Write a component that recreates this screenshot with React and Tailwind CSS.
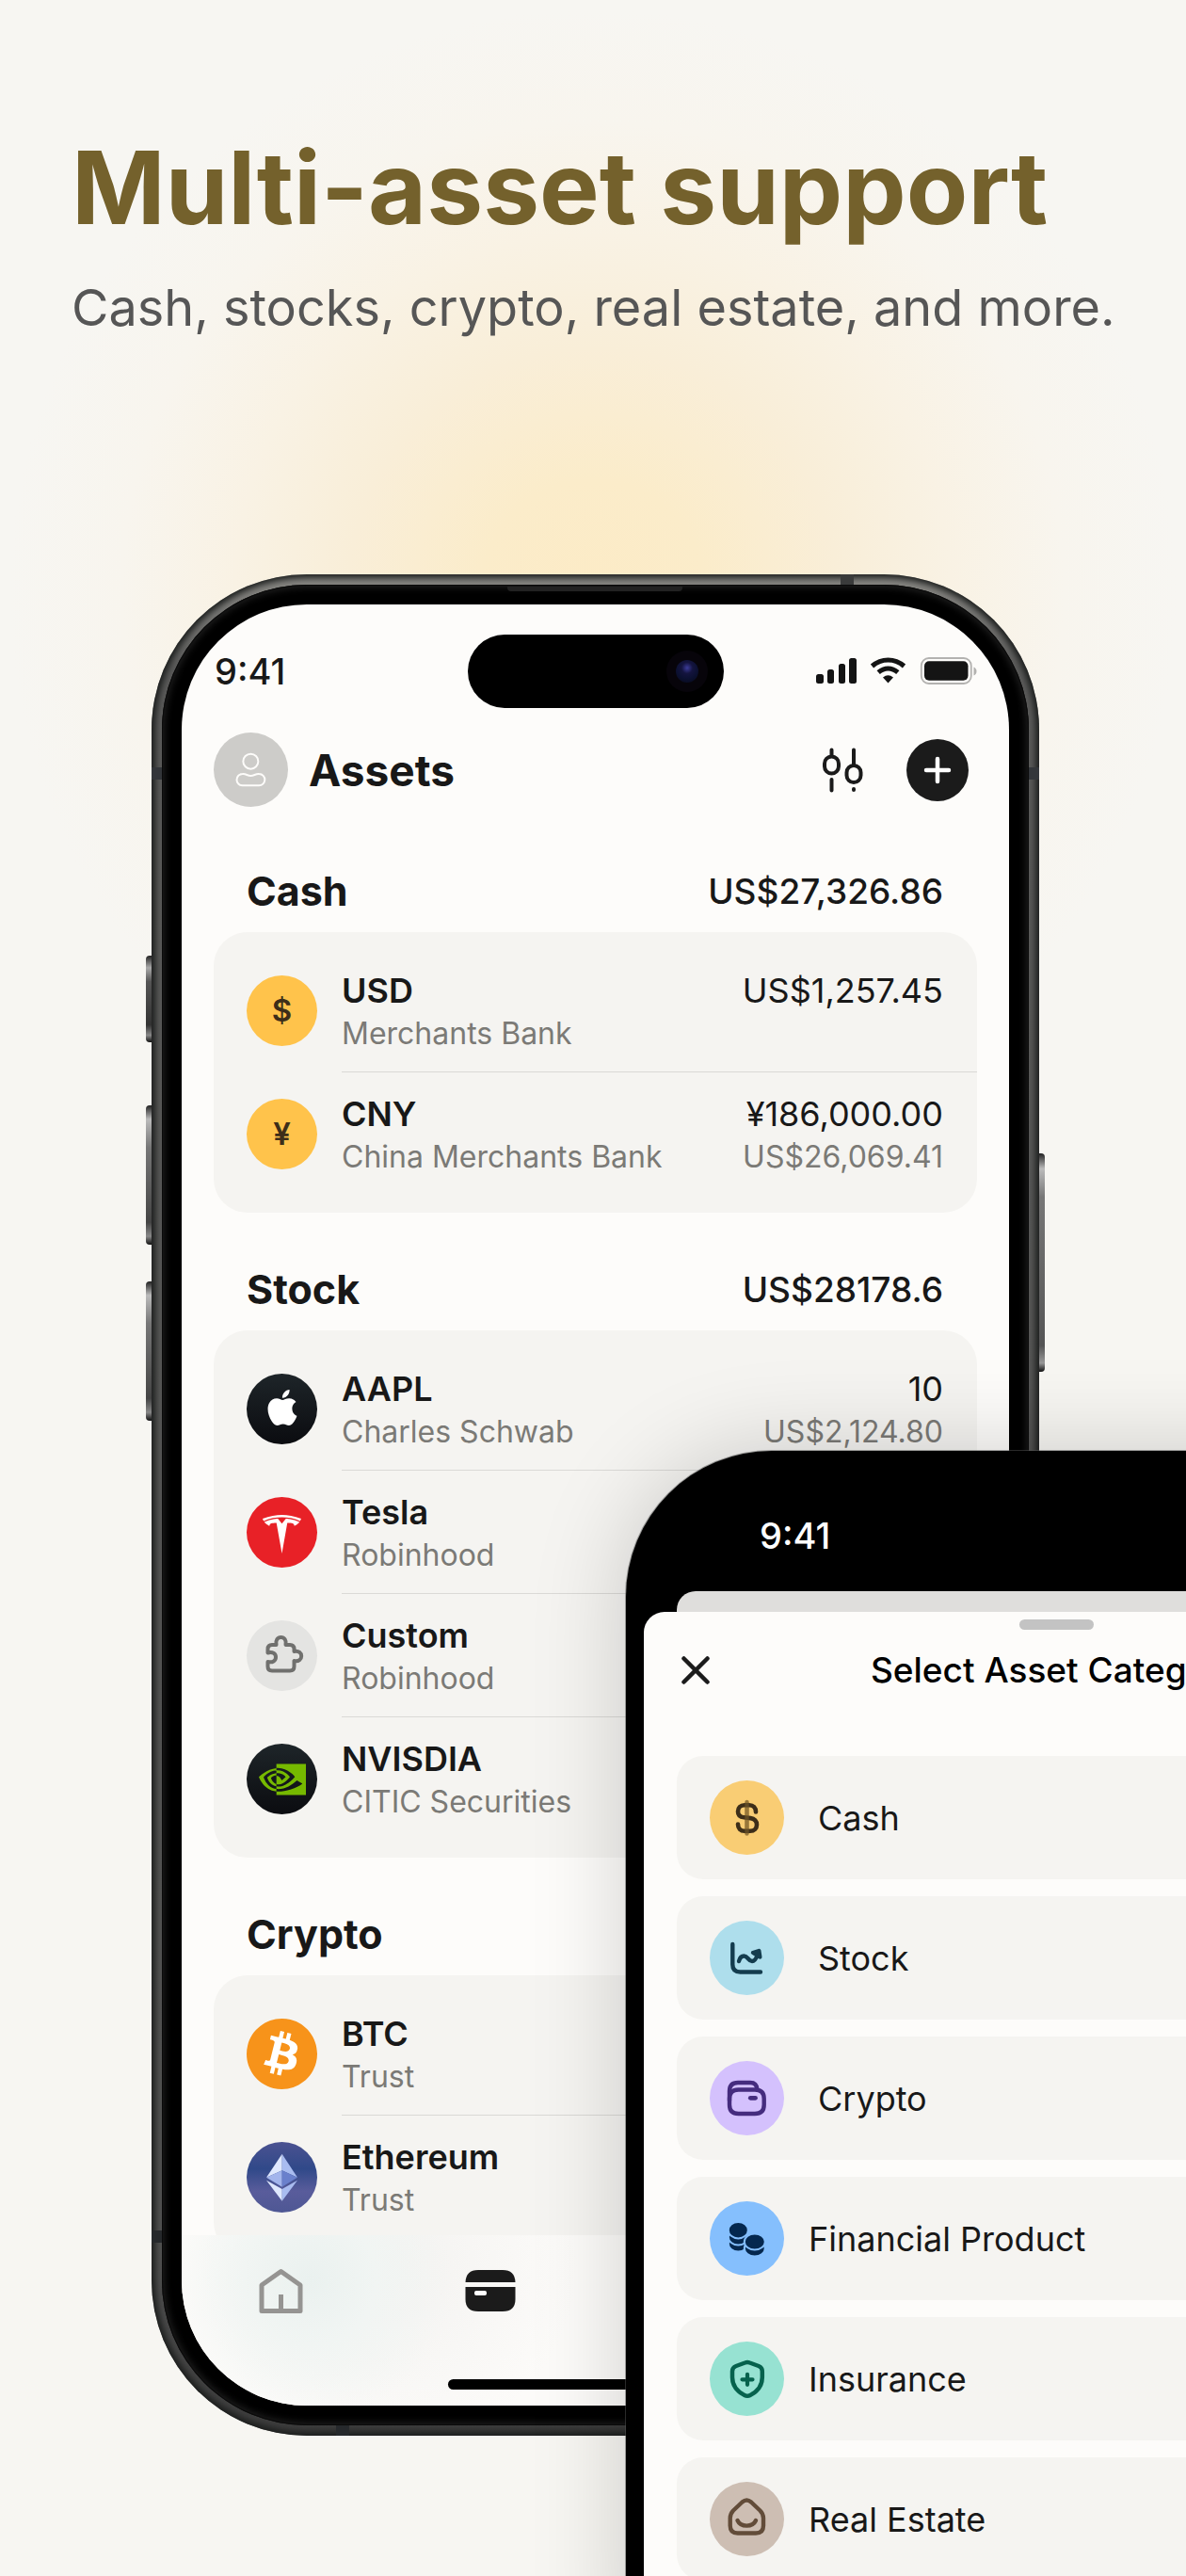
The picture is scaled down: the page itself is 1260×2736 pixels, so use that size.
import React from 'react';
import { SiApple, SiTesla, SiNvidia, SiBitcoin } from 'react-icons/si';

const sections = [
  {
    title: 'Cash',
    total: 'US$27,326.86',
    items: [
      { icon: <Currency sign="$" />, name: 'USD', place: 'Merchants Bank', amount: 'US$1,257.45' },
      { icon: <Currency sign="¥" />, name: 'CNY', place: 'China Merchants Bank', amount: '¥186,000.00', value: 'US$26,069.41' },
    ],
  },
  {
    title: 'Stock',
    total: 'US$28178.6',
    items: [
      { icon: <AppleBadge />, name: 'AAPL', place: 'Charles Schwab', amount: '10', value: 'US$2,124.80' },
      { icon: <TeslaBadge />, name: 'Tesla', place: 'Robinhood' },
      { icon: <PuzzleBadge />, name: 'Custom', place: 'Robinhood' },
      { icon: <NvidiaBadge />, name: 'NVISDIA', place: 'CITIC Securities' },
    ],
  },
  {
    title: 'Crypto',
    items: [
      { icon: <BitcoinBadge />, name: 'BTC', place: 'Trust' },
      { icon: <EthereumBadge />, name: 'Ethereum', place: 'Trust' },
    ],
  },
];

const categories = [
  { name: 'Cash', bg: 'bg-[#f9cd74]', gap: 'gap-9', icon: <DollarIcon /> },
  { name: 'Stock', bg: 'bg-[#aedeec]', gap: 'gap-9', icon: <ChartIcon /> },
  { name: 'Crypto', bg: 'bg-[#d4c1fd]', gap: 'gap-9', icon: <WalletIcon /> },
  { name: 'Financial Product', bg: 'bg-[#85bffd]', gap: 'gap-[26px]', icon: <CoinsIcon /> },
  { name: 'Insurance', bg: 'bg-[#97e2d2]', gap: 'gap-[26px]', icon: <ShieldIcon /> },
  { name: 'Real Estate', bg: 'bg-[#cdbeb3]', gap: 'gap-[26px]', icon: <HouseIcon /> },
];

/* ---------- asset badges ---------- */

function Currency({ sign }) {
  return (
    <span className="flex size-[75px] items-center justify-center rounded-full bg-[#ffc34b] text-[33px] leading-none font-semibold text-[#3d2e19]">
      {sign}
    </span>
  );
}

function AppleBadge() {
  return (
    <span className="flex size-[75px] items-center justify-center rounded-full bg-linear-to-b from-[#1e2529] to-[#0b0c10] pb-1 text-white">
      <SiApple className="size-[38px]" />
    </span>
  );
}

function TeslaBadge() {
  return (
    <span className="flex size-[75px] items-center justify-center rounded-full bg-[#e82127] pt-1 text-white">
      <SiTesla className="size-[41px]" />
    </span>
  );
}

function NvidiaBadge() {
  return (
    <span className="flex size-[75px] items-center justify-center rounded-full bg-linear-to-b from-[#1e2529] to-[#0b0c10] text-[#76b900]">
      <SiNvidia className="size-[50px]" />
    </span>
  );
}

function BitcoinBadge() {
  return (
    <span className="relative flex size-[75px] items-center justify-center">
      <span className="absolute inset-2 rounded-full bg-white" />
      <SiBitcoin className="relative size-[75px] text-[#f7931a]" />
    </span>
  );
}

function PuzzleBadge() {
  return (
    <span className="block size-[75px] rounded-full bg-[#e4e4e2]">
      <svg viewBox="0 0 75 75" fill="none" stroke="#70706e" strokeWidth="4" strokeLinejoin="round" className="size-full">
        <path d="M27 26H31.5c-1-5 1.5-8 5-8s6 3 5 8H46q4.5 0 4.5 4.5V33c5-1 7.7 1.7 7.7 5s-2.7 6-7.7 5V49q0 4.5-4.5 4.5H27q-4.5 0-4.5-4.5V44c5 1.2 8.5-1 8.5-5s-3.5-6-8.5-4.5V30.5Q22.5 26 27 26Z" />
      </svg>
    </span>
  );
}

function EthereumBadge() {
  return (
    <svg viewBox="0 0 225 225" className="size-[75px]">
      <defs>
        <linearGradient id="eth" x1="0" y1="0" x2="0" y2="1">
          <stop offset="0" stopColor="#4b5291" />
          <stop offset="0.38" stopColor="#304989" />
          <stop offset="0.7" stopColor="#595c9b" />
          <stop offset="1" stopColor="#4e5794" />
        </linearGradient>
      </defs>
      <circle cx="112.5" cy="112.5" r="112.5" fill="url(#eth)" />
      <path d="M113 38 63 113 113 91Z" fill="#dfe8fd" />
      <path d="M113 38 162 113 113 91Z" fill="#a9bcf0" />
      <path d="M63 113 113 91V143Z" fill="#a3b5ec" />
      <path d="M162 113 113 91V143Z" fill="#6a80cc" />
      <path d="M63 122 113 150V188Z" fill="#dfe8fd" />
      <path d="M162 122 113 150V188Z" fill="#a9bcf0" />
    </svg>
  );
}

/* ---------- category icons, drawn on the 79px disc ---------- */

function DollarIcon() {
  return (
    <svg viewBox="0 0 79 79" fill="none" strokeLinecap="round" className="size-full">
      <path d="M39.5 23V56.5" stroke="#a3803f" strokeWidth="4.4" />
      <path d="M49 33.5c0-4.5-2.8-7.3-7-7.3h-5c-4.300 0-7 2.800-7 6.700s2.500 6 6.500 6.400l7 .8c4 .4 6.500 3 6.500 6.900s-2.800 6.800-7 6.800h-6c-4.200 0-7-2.800-7-7.300" stroke="#3d2e19" strokeWidth="4.6" />
      <path d="M39.5 24V55.5" stroke="#8a6a33" strokeOpacity="0.45" strokeWidth="4.4" />
    </svg>
  );
}

function ChartIcon() {
  return (
    <svg viewBox="0 0 79 79" fill="none" stroke="#143c4e" strokeWidth="4.4" strokeLinecap="round" strokeLinejoin="round" className="size-full">
      <path d="M24.3 25V46.5Q24.3 54.5 32.5 54.5H54" />
      <path d="M31 43c1-4 3-5.5 5.5-5.5 4 0 4.5 5.5 8.5 5.5 3 0 4.500-3 6-7" />
      <path d="M46 34 52.3 32 53.3 38.5Z" fill="#143c4e" />
    </svg>
  );
}

function WalletIcon() {
  return (
    <svg viewBox="0 0 79 79" fill="none" stroke="#452c7e" strokeWidth="4.4" strokeLinecap="round" className="size-full">
      <path d="M21 42V32q0-9 9-9H43q7 0 7.5 7.5" />
      <path d="M21 40q0-9.5 9.5-9.5H48q9.7 0 9.7 9.5V46.5q0 9.5-9.7 9.5H30.5Q21 56 21 46.5Z" />
      <path d="M43.3 39.3H48.5" strokeWidth="4.8" />
    </svg>
  );
}

function CoinsIcon() {
  return (
    <svg viewBox="0 0 79 79" fill="#05284f" stroke="#85bffd" strokeWidth="2" className="size-full">
      <ellipse cx="30.3" cy="45" rx="10.5" ry="8.5" />
      <ellipse cx="30.3" cy="38" rx="10.5" ry="8.5" />
      <ellipse cx="30.3" cy="30.7" rx="10.5" ry="8.7" />
      <ellipse cx="47.8" cy="50" rx="11" ry="8.5" />
      <ellipse cx="47.8" cy="43" rx="11" ry="8.5" />
    </svg>
  );
}

function ShieldIcon() {
  return (
    <svg viewBox="0 0 79 79" fill="none" stroke="#06624d" strokeWidth="4.5" strokeLinecap="round" strokeLinejoin="round" className="size-full">
      <path d="M37.5 22.5Q40 21.5 42.5 22.5L52 26Q55.8 27.5 55.8 31.5V38C55.8 47 51 53 43 57Q40 58.7 37 57C29 53 24 47 24 38V31.5Q24 27.5 28 26Z" />
      <path d="M34.5 40.3H45.5M40 34.8V45.8" strokeWidth="4.2" />
    </svg>
  );
}

function HouseIcon() {
  return (
    <svg viewBox="0 0 79 79" fill="none" stroke="#624c39" strokeWidth="4.4" strokeLinecap="round" strokeLinejoin="round" className="size-full">
      <path d="M34.5 21.5Q39.3 17.5 44 21.5L53.5 30.5Q57 34 57 38.5V46.5Q57 54.5 49 54.5H29.7Q21.7 54.5 21.7 46.5V38.5Q21.7 34 25 30.5Z" />
      <path d="M29.5 41C33 48.5 45.5 48.5 49 41" />
    </svg>
  );
}

/* ---------- phone parts ---------- */

function StatusIcons() {
  return (
    <svg viewBox="0 0 171 30" className="h-[30px] w-[171px]" fill="#141414">
      <rect x="0" y="18" width="8" height="10" rx="2.5" />
      <rect x="12" y="13" width="7" height="15" rx="2.5" />
      <rect x="24" y="7" width="7" height="21" rx="2.5" />
      <rect x="35" y="1" width="8" height="27" rx="2.5" />
      <g fill="none" stroke="#141414" strokeWidth="5">
        <path d="M59.5 9.5C69.5 .8 83.5 .8 93.5 9.5" />
        <path d="M66.2 16.2C72.5 10.7 80.5 10.7 86.8 16.2" />
      </g>
      <path d="M71 21.5Q76.5 17 82 21.5L76.5 27.5Z" />
      <rect x="111.8" y="1" width="53" height="27" rx="8" fill="none" stroke="#b3b2b0" strokeWidth="1.8" />
      <rect x="115" y="4.3" width="46.5" height="20.5" rx="5" />
      <path d="M167.5 10.5V19.5Q170.5 18 170.5 15T167.5 10.5Z" fill="#b3b2b0" />
    </svg>
  );
}

function AssetRow({ item, last }) {
  return (
    <li className="flex h-[131px] gap-[26px] pl-[35px]">
      <span className="flex items-center">{item.icon}</span>
      <div className={last ? 'flex flex-1 justify-between pt-[22px] pr-9' : 'flex flex-1 justify-between border-b border-[#dad9d6] pt-[22px] pr-9'}>
        <div>
          <p className="text-[36px] leading-[45px] font-semibold">{item.name}</p>
          <p className="text-[32px] leading-[45px] text-[#7b7a76]">{item.place}</p>
        </div>
        <div className="text-right">
          <p className="text-[36px] leading-[45px]">{item.amount}</p>
          <p className="text-[32px] leading-[45px] text-[#7b7a76]">{item.value}</p>
        </div>
      </div>
    </li>
  );
}

function AssetsPhone() {
  return (
    <div className="relative h-[1977px] w-full max-w-[943px]">
      {/* side keys */}
      <span className="absolute top-[405px] -left-[6px] h-[92px] w-2 rounded-l-sm bg-[linear-gradient(to_bottom,#222,#aaa_14%,#555_30%,#333_80%,#888_92%,#111)]" />
      <span className="absolute top-[564px] -left-[6px] h-[148px] w-2 rounded-l-sm bg-[linear-gradient(to_bottom,#222,#bbb_10%,#777_30%,#444_84%,#888_94%,#111)]" />
      <span className="absolute top-[751px] -left-[6px] h-[148px] w-2 rounded-l-sm bg-[linear-gradient(to_bottom,#222,#bbb_10%,#777_30%,#444_84%,#888_94%,#111)]" />
      <span className="absolute top-[615px] -right-[6px] h-[232px] w-2 rounded-r-sm bg-[linear-gradient(to_bottom,#222,#bbb_7%,#777_20%,#555_88%,#999_96%,#111)]" />

      <div className="relative size-full rounded-[165px] bg-[linear-gradient(to_bottom,#8b8a86,#5c5c5b_5%,#525252_90%,#3c3c3c)] p-[11px] shadow-[inset_0_0_7px_4px_#1b1d1c]">
        {/* antenna bands */}
        <span className="absolute top-[205px] left-0 h-[13px] w-[11px] bg-[#33363a]" />
        <span className="absolute top-[205px] right-0 h-[13px] w-[11px] bg-[#33363a]" />
        <span className="absolute top-0 right-[197px] h-[11px] w-[14px] bg-[#3a3b3b]" />
        <span className="absolute bottom-[205px] left-0 h-[13px] w-[11px] bg-[#26292c]" />
        <span className="absolute bottom-0 left-[196px] h-[11px] w-[14px] bg-[#26292c]" />

        <div className="relative size-full rounded-[154px] bg-black p-[21px] shadow-[inset_0_0_0_1px_#0a0a0a,inset_0_0_9px_2px_#242424]">
          <span className="absolute top-[2px] left-[367px] h-[5px] w-[186px] rounded-b-sm bg-[#222]" />

          <div className="flex size-full flex-col overflow-hidden rounded-[133px] bg-[#fdfcfa]">
            <div className="grid grid-cols-[1fr_272px_1fr] items-center pt-8 pr-[34px] pl-[35px]">
              <span className="text-[38px] leading-none font-medium">9:41</span>
              <div className="flex h-[78px] items-center justify-end rounded-full bg-black pr-[17px]">
                <span className="flex size-[44px] items-center justify-center rounded-full bg-[#07040a]">
                  <span className="size-6 rounded-full bg-[radial-gradient(circle_at_50%_35%,#3c3c9a,#14143f_30%,#0b1030_60%,#080816)]" />
                </span>
              </div>
              <div className="flex justify-end">
                <StatusIcons />
              </div>
            </div>

            <header className="flex items-center pt-[26px] pr-[43px] pl-[34px]">
              <button aria-label="Profile" className="size-[79px] rounded-full bg-[#cdccc9]">
                <svg viewBox="0 0 237 237" fill="none" stroke="#fdfcfa" strokeWidth="6" strokeLinejoin="round" className="size-full">
                  <circle cx="118" cy="92" r="24" />
                  <path d="M92 132C104 131 107 138 118 138S133 131 145 132A18 18 0 0 1 144 169H92A18 18 0 0 1 92 132Z" />
                </svg>
              </button>
              <h2 className="flex-1 pl-[22px] text-[46px] leading-none font-bold">Assets</h2>
              <button aria-label="Filter" className="mr-[46px]">
                <svg viewBox="0 0 43 48" fill="none" stroke="#1b1b1b" strokeWidth="4" strokeLinecap="round" className="h-12 w-[43px]">
                  <path d="M9.5 2.5V9M9.5 34V45.5M33 2.5V18M33 44V45" />
                  <rect x="2" y="9.5" width="15" height="18" rx="7.5" />
                  <rect x="25.5" y="19" width="15" height="18" rx="7.5" />
                </svg>
              </button>
              <button aria-label="Add asset" className="flex size-[66px] items-center justify-center rounded-full bg-[#1b1b1b]">
                <svg viewBox="0 0 30 30" stroke="#fff" strokeWidth="4.5" strokeLinecap="round" className="size-[30px]">
                  <path d="M15 3V27M3 15H27" />
                </svg>
              </button>
            </header>

            <main className="min-h-0 flex-1 overflow-hidden px-[34px] pt-2">
              {sections.map((section) => (
                <section key={section.title} className="pt-[37px]">
                  <div className="flex h-[88px] items-center justify-between pr-9 pl-[35px]">
                    <h3 className="text-[43px] leading-none font-bold">{section.title}</h3>
                    <span className="text-[37px] leading-none font-medium">{section.total}</span>
                  </div>
                  <ul className="rounded-[36px] bg-[#f5f4f1] py-[18px]">
                    {section.items.map((item, i) => (
                      <AssetRow key={item.name} item={item} last={i === section.items.length - 1} />
                    ))}
                  </ul>
                </section>
              ))}
            </main>

            <nav className="flex h-[181px] flex-col justify-between bg-[#fcfbf9] bg-[radial-gradient(circle_at_136px_46px,#eaf1ef,#f1f5f3_70px,transparent_150px),radial-gradient(circle_at_220px_30px,#f3f2f0,transparent_200px)] pt-[35px] pb-[17px]">
              <div className="flex gap-[168px] pl-[79px]">
                <button aria-label="Home" className="h-12 w-[54px]">
                  <svg viewBox="0 0 54 48" fill="none" stroke="#959492" strokeWidth="5" strokeLinejoin="round" className="size-full">
                    <path d="M6 18 26.5 3.5 47 18V45.5H6ZM26.5 28V45" />
                  </svg>
                </button>
                <button aria-label="Assets" className="h-12 w-[54px]">
                  <svg viewBox="0 0 54 48" className="size-full">
                    <path d="M0.5 15Q1 2 14 2H40Q53 2 53.5 15Z" fill="#1b1b1b" />
                    <path d="M0.5 20H53.5V33Q53.5 46 40 46H14Q0.5 46 0.5 33Z" fill="#1b1b1b" />
                    <rect x="10" y="24" width="13" height="5" rx="2" fill="#fff" />
                  </svg>
                </button>
              </div>
              <span className="mx-auto h-[11px] w-[313px] rounded-full bg-black" />
            </nav>
          </div>
        </div>
      </div>
    </div>
  );
}

function CategoryPhone() {
  return (
    <div className="absolute top-[1541px] left-[665px] w-[914px] rounded-t-[155px] bg-black px-[19px] shadow-[0_0_100px_rgba(0,0,0,0.18),0_0_0_1px_rgba(90,90,90,0.5)]">
      <div className="flex h-[149px] items-center pt-[30px] pl-[123px] text-[38px] leading-none font-medium text-white">9:41</div>
      <div className="mx-[35px] h-[22px] rounded-t-[20px] bg-[#dfdedc]" />
      <div className="rounded-t-[22px] bg-[#fdfcfa] px-[35px] pb-20">
        <div className="flex justify-center pt-2">
          <span className="h-[11px] w-[79px] rounded-full bg-[#c3c3c3]" />
        </div>
        <header className="grid grid-cols-[40px_1fr_40px] items-center pt-5">
          <button aria-label="Close" className="flex size-10 items-center justify-center">
            <svg viewBox="0 0 30 30" stroke="#1b1b1b" strokeWidth="4.5" strokeLinecap="round" className="size-[30px]">
              <path d="M2.5 2.5 27.5 27.5M27.5 2.5 2.5 27.5" />
            </svg>
          </button>
          <h2 className="text-center text-[37px] leading-[45px] font-medium text-black">Select Asset Category</h2>
        </header>
        <div className="flex flex-col gap-[18px] pt-[69px]">
          {categories.map((c) => (
            <button key={c.name} className={`flex h-[131px] items-center rounded-[28px] bg-[#f5f4f1] pl-[35px] text-left ${c.gap}`}>
              <span className={`size-[79px] rounded-full ${c.bg}`}>{c.icon}</span>
              <span className="text-[36px] leading-none">{c.name}</span>
            </button>
          ))}
        </div>
      </div>
    </div>
  );
}

const App = () => {
  return (
    <div className="relative h-screen overflow-hidden bg-[#f7f6f2] bg-[radial-gradient(circle_at_50%_630px,#fcebc6,#fbecca_120px,#f9eed8_260px,#f9f2e4_380px,#f8f5ee_500px,#f7f6f2_620px)] font-[Inter,'Liberation_Sans',sans-serif] text-[#181818]">
      <div className="px-[76px] pt-[131px]">
        <h1 className="text-[107px] leading-[136px] font-bold whitespace-nowrap text-[#74612c]">Multi-asset support</h1>
        <p className="pt-6 text-[54px] leading-[72px] whitespace-nowrap text-[#565656]">Cash, stocks, crypto, real estate, and more.</p>
      </div>
      <div className="flex justify-center pt-[247px] pl-[5px]">
        <AssetsPhone />
      </div>
      <CategoryPhone />
    </div>
  );
};

export default App;
